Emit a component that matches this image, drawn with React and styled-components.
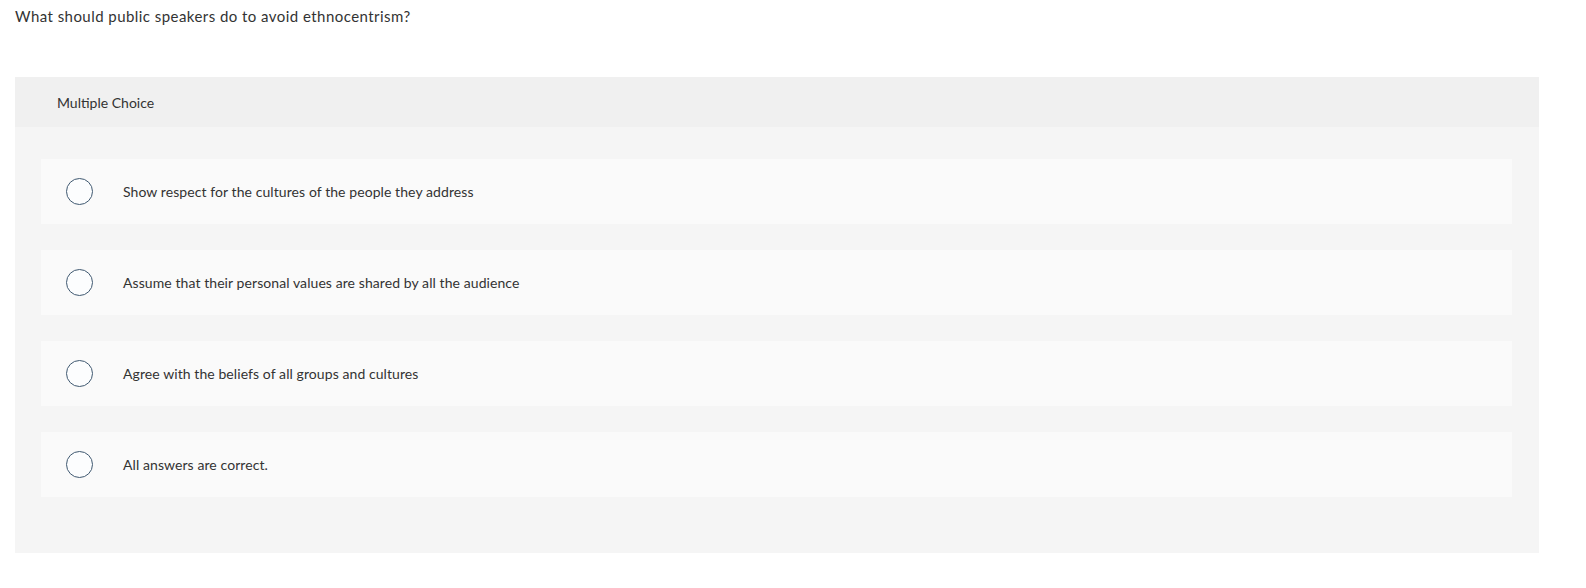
import React from 'react'
import styled, { createGlobalStyle } from 'styled-components'

const GlobalStyle = createGlobalStyle`
    body {
        margin: 0;
        background: #ffffff;
        font-family: Lato, "Open Sans", Arial, sans-serif;
        color: #333333;
    }
`
const Page = styled.div`
    display: flex;
    flex-direction: column;
    padding: 0 47px 0 15px;
`
const Question = styled.div`
    font-size: 15px;
    line-height: 20px;
    padding-top: 6px;
    letter-spacing: 0.45px;
    color: #333333;
`
const Panel = styled.div`
    margin-top: 51px;
    background: #f5f5f5;
    display: flex;
    flex-direction: column;
`
const PanelHeader = styled.div`
    height: 50px;
    background: #f0f0f0;
    display: flex;
    align-items: center;
    padding-left: 42px;
    font-size: 14px;
    color: #333333;
`
const OptionList = styled.div`
    display: flex;
    flex-direction: column;
    gap: 26px;
    padding: 32px 27px 56px 26px;
`
const Option = styled.label`
    height: 65px;
    background: #fafafa;
    display: flex;
    align-items: center;
    padding-left: 25px;
    cursor: pointer;
`
const Radio = styled.span`
    width: 25px;
    height: 25px;
    border: 1.5px solid #3f5870;
    border-radius: 50%;
    background: #fcfdfe;
    flex: none;
`
const OptionText = styled.span`
    margin-left: 30px;
    font-size: 14px;
    letter-spacing: 0.08px;
    color: #333333;
`

const answers = [
    'Show respect for the cultures of the people they address',
    'Assume that their personal values are shared by all the audience',
    'Agree with the beliefs of all groups and cultures',
    'All answers are correct.',
]

export default function App() {
    return (
        <>
            <GlobalStyle />
            <Page>
                <Question>What should public speakers do to avoid ethnocentrism?</Question>
                <Panel>
                    <PanelHeader>Multiple Choice</PanelHeader>
                    <OptionList>
                        {answers.map(a => (
                            <Option key={a}>
                                <Radio />
                                <OptionText>{a}</OptionText>
                            </Option>
                        ))}
                    </OptionList>
                </Panel>
            </Page>
        </>
    )
}
